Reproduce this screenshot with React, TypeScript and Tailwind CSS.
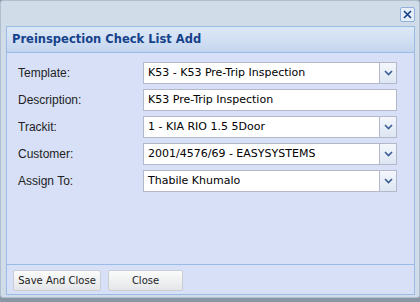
import React from 'react';

const fields = [
  { label: 'Template:', value: 'K53 - K53 Pre-Trip Inspection', select: true },
  { label: 'Description:', value: 'K53 Pre-Trip Inspection', select: false },
  { label: 'Trackit:', value: '1 - KIA RIO 1.5 5Door', select: true },
  { label: 'Customer:', value: '2001/4576/69 - EASYSYSTEMS', select: true },
  { label: 'Assign To:', value: 'Thabile Khumalo', select: true },
];

const Arrow = () => (
  <div className="w-[17px] h-full border-l border-[#b5b8c8] bg-gradient-to-b from-[#f4f7fc] to-[#dde6f3] flex items-center justify-center">
    <svg width="9" height="6" viewBox="0 0 9 6">
      <path d="M1 1 L4.5 4.5 L8 1" fill="none" stroke="#3a5e95" strokeWidth="1.6" />
    </svg>
  </div>
);

export default function App() {
  return (
    <div className="w-[420px] h-[302px] bg-[#8a96a6] pb-[4px]">
      <div className="w-full h-full bg-[#d0dce8] border border-[#b0bfd0] rounded-[3px] flex flex-col pl-[5px] pr-[4px] pb-[2px]">
        {/* window title bar */}
        <div className="h-[25px] flex items-start justify-end pt-[6px]">
          <div className="w-[15px] h-[15px] rounded-[2px] border border-[#8fb1dc] bg-[#e6eefa] flex items-center justify-center">
            <svg width="9" height="9" viewBox="0 0 9 9">
              <path d="M1 1 L8 8 M8 1 L1 8" stroke="#15428b" strokeWidth="1.7" />
            </svg>
          </div>
        </div>

        {/* panel */}
        <div className="flex-1 flex flex-col border border-[#99bbe8] bg-[#d7e0f7]" style={{ fontFamily: '"DejaVu Sans", Tahoma, sans-serif' }}>
          <div className="h-[26px] border-b border-[#99bbe8] bg-gradient-to-b from-[#dde8f6] via-[#d2e0f3] to-[#c3d5ee] flex items-center px-[5px]">
            <span className="text-[11.5px] font-bold text-[#15428b]">Preinspection Check List Add</span>
          </div>

          <div className="flex-1 border-b border-[#99bbe8] px-[11px] pt-[9px] flex flex-col gap-[5px]">
            {fields.map((f) => (
              <div key={f.label} className="flex items-center h-[22px]">
                <span className="w-[125px] text-[12px] text-[#222]" style={{ fontFamily: '"Liberation Sans", Arial, sans-serif' }}>
                  {f.label}
                </span>
                <div className="w-[254px] h-[22px] bg-white border border-[#b5b8c8] flex items-center">
                  <span className="flex-1 pl-[4px] text-[11px] text-black whitespace-nowrap overflow-hidden">{f.value}</span>
                  {f.select && <Arrow />}
                </div>
              </div>
            ))}
          </div>

          <div className="h-[29px] flex items-start pt-[5px] gap-[7px] px-[6px]">
            <button className="w-[88px] h-[21px] rounded-[2px] border border-[#c9cdd4] bg-gradient-to-b from-[#fbfbfb] to-[#e4e6e9] text-[10px] text-[#222]">
              Save And Close
            </button>
            <button className="w-[75px] h-[21px] rounded-[2px] border border-[#c9cdd4] bg-gradient-to-b from-[#fbfbfb] to-[#e4e6e9] text-[10px] text-[#222]">
              Close
            </button>
          </div>
        </div>
      </div>
    </div>
  );
}
